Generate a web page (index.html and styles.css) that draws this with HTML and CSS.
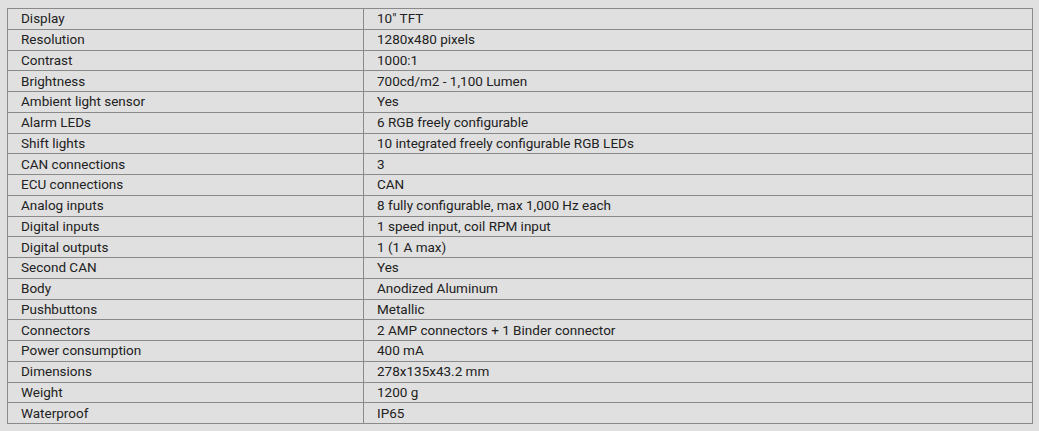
FILE: index.html
```html
<!DOCTYPE html>
<html>
<head>
<meta charset="utf-8">
<link rel="stylesheet" href="styles.css">
</head>
<body>
<table class="specs">
<colgroup><col class="col-k"><col class="col-v"></colgroup>
<tbody>
<tr><td>Display</td><td>10" TFT</td></tr>
<tr><td>Resolution</td><td>1280x480 pixels</td></tr>
<tr><td>Contrast</td><td>1000:1</td></tr>
<tr><td>Brightness</td><td>700cd/m2 - 1,100 Lumen</td></tr>
<tr><td>Ambient light sensor</td><td>Yes</td></tr>
<tr><td>Alarm LEDs</td><td>6 RGB freely configurable</td></tr>
<tr><td>Shift lights</td><td>10 integrated freely configurable RGB LEDs</td></tr>
<tr><td>CAN connections</td><td>3</td></tr>
<tr><td>ECU connections</td><td>CAN</td></tr>
<tr><td>Analog inputs</td><td>8 fully configurable, max 1,000 Hz each</td></tr>
<tr><td>Digital inputs</td><td>1 speed input, coil RPM input</td></tr>
<tr><td>Digital outputs</td><td>1 (1 A max)</td></tr>
<tr><td>Second CAN</td><td>Yes</td></tr>
<tr><td>Body</td><td>Anodized Aluminum</td></tr>
<tr><td>Pushbuttons</td><td>Metallic</td></tr>
<tr><td>Connectors</td><td>2 AMP connectors + 1 Binder connector</td></tr>
<tr><td>Power consumption</td><td>400 mA</td></tr>
<tr><td>Dimensions</td><td>278x135x43.2 mm</td></tr>
<tr><td>Weight</td><td>1200 g</td></tr>
<tr><td>Waterproof</td><td>IP65</td></tr>
</tbody>
</table>
</body>
</html>
```
FILE: styles.css
```css
html, body {
  margin: 0;
  background: #e0e0e0;
}
body {
  padding: 8px 6px 0 7px;
  font-family: Roboto, "Liberation Sans", sans-serif;
  font-size: 13.5px;
  color: #222222;
}
.specs {
  border-collapse: collapse;
  width: 1026px;
  table-layout: fixed;
}
.col-k {
  width: 356px;
}
.specs td {
  border: 1px solid #8a8a8a;
  height: 19.75px;
  padding: 0 0 0 13px;
  line-height: 15px;
  vertical-align: middle;
  white-space: nowrap;
}
```
